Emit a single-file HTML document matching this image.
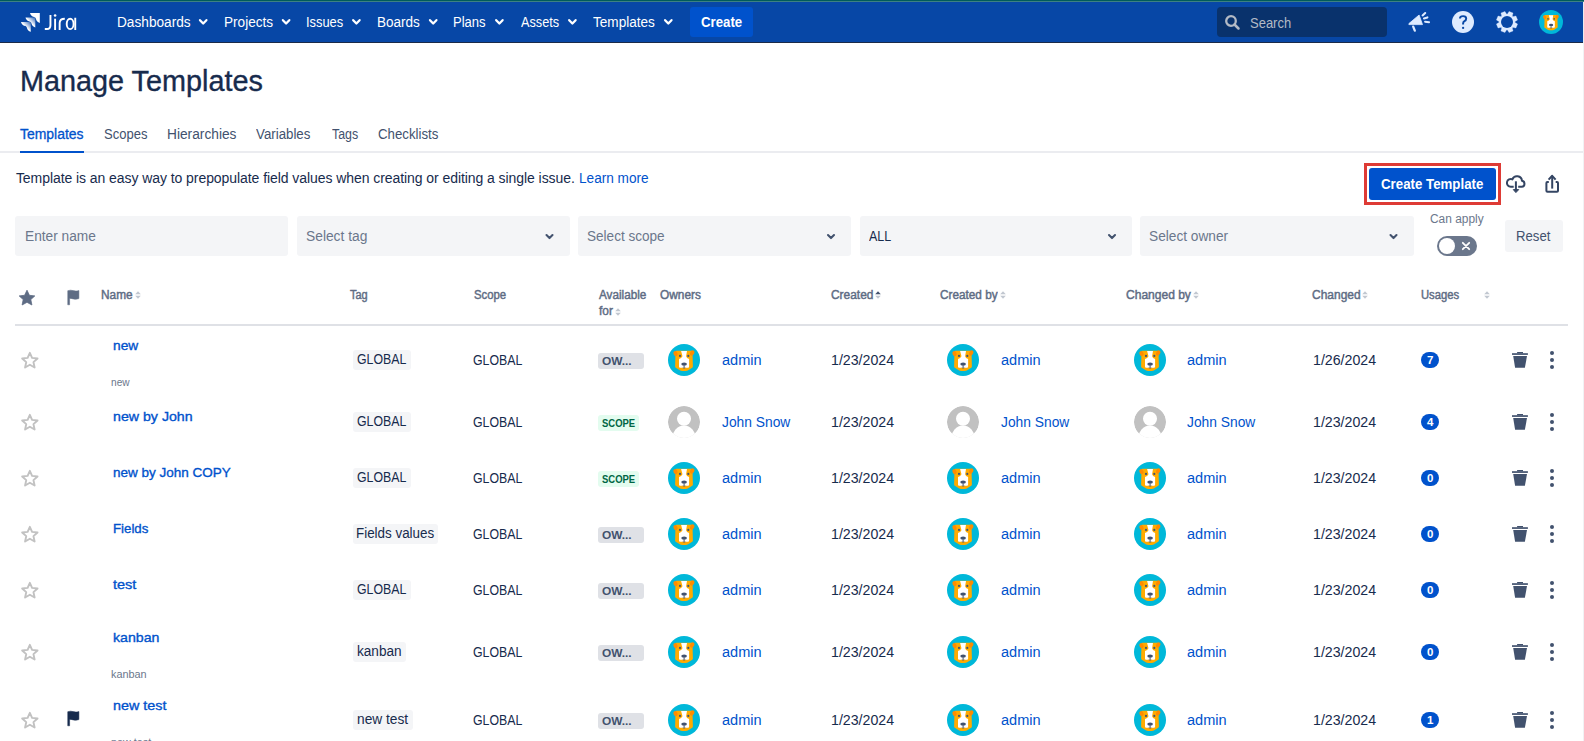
<!DOCTYPE html>
<html><head><meta charset="utf-8"><title>Manage Templates</title>
<style>
html,body{margin:0;padding:0;background:#fff;width:1584px;height:741px;overflow:hidden;position:relative;font-family:"Liberation Sans",sans-serif;}
.t{position:absolute;white-space:nowrap;font-family:"Liberation Sans",sans-serif;}
svg{overflow:visible}
</style></head><body>
<div style="position:absolute;left:0px;top:0px;width:1584px;height:1px;background:#005B5C;border-radius:0px;"></div>
<div style="position:absolute;left:0px;top:1px;width:1584px;height:1px;background:#3D8181;border-radius:0px;"></div>
<div style="position:absolute;left:0px;top:2px;width:1583px;height:40px;background:#0747A6;border-radius:0px;"></div>
<div style="position:absolute;left:0px;top:42px;width:1583px;height:1px;background:#1B2B48;border-radius:0px;"></div>
<div style="position:absolute;left:1583px;top:2px;width:1px;height:41px;background:#E9EBEF;border-radius:0px;"></div>
<div style="position:absolute;left:1583px;top:43px;width:1px;height:698px;background:#F1F2F4;border-radius:0px;"></div>
<svg style="position:absolute;left:19px;top:11px" width="24" height="22" viewBox="0 0 24 22">
<defs><linearGradient id="lg1" x1="1" y1="0" x2="0" y2="1"><stop offset="0.05" stop-color="#fff" stop-opacity="0.25"/><stop offset="0.5" stop-color="#fff"/></linearGradient></defs>
<path transform="translate(11,2.1)" d="M0 0 H9.8 V9.8 C8.6 9.5 7.2 8.6 6.4 7.2 C6 6.4 6 5.6 5.6 4.9 C5 4.1 4.2 3.9 3.3 3.7 C1.6 3.2 0.4 1.8 0 0 Z" fill="#fff"/>
<path transform="translate(6.5,6.6)" d="M0 0 H9.8 V9.8 C8.6 9.5 7.2 8.6 6.4 7.2 C6 6.4 6 5.6 5.6 4.9 C5 4.1 4.2 3.9 3.3 3.7 C1.6 3.2 0.4 1.8 0 0 Z" fill="url(#lg1)"/>
<path transform="translate(2,11)" d="M0 0 H9.8 V9.8 C8.6 9.5 7.2 8.6 6.4 7.2 C6 6.4 6 5.6 5.6 4.9 C5 4.1 4.2 3.9 3.3 3.7 C1.6 3.2 0.4 1.8 0 0 Z" fill="url(#lg1)"/>
</svg>
<svg style="position:absolute;left:44px;top:13px" width="34" height="19" viewBox="0 0 34 19">
<path d="M6.45 1.9 V12.3 Q6.45 16.05 3 16.05 H0.8" stroke="#fff" stroke-width="1.9" fill="none"/>
<circle cx="11.1" cy="2.5" r="1.3" fill="#fff"/>
<path d="M11.1 5.7 V17" stroke="#fff" stroke-width="1.9"/>
<path d="M15.65 17 V10 Q15.65 5.7 20.8 5.7" stroke="#fff" stroke-width="1.9" fill="none"/>
<ellipse cx="26.15" cy="10.9" rx="3.45" ry="5.2" stroke="#fff" stroke-width="1.9" fill="none"/>
<path d="M31.25 4.75 V17" stroke="#fff" stroke-width="1.9"/>
</svg>
<svg style="position:absolute;left:0;top:0;overflow:visible" width="1" height="1"><path d="M200.0 20.2 L203.2 23.5 L206.4 20.2" stroke="#FFFFFF" stroke-width="2.3" fill="none" stroke-linecap="round" stroke-linejoin="round"/></svg>
<svg style="position:absolute;left:0;top:0;overflow:visible" width="1" height="1"><path d="M282.9 20.2 L286.09999999999997 23.5 L289.29999999999995 20.2" stroke="#FFFFFF" stroke-width="2.3" fill="none" stroke-linecap="round" stroke-linejoin="round"/></svg>
<svg style="position:absolute;left:0;top:0;overflow:visible" width="1" height="1"><path d="M353.2 20.2 L356.4 23.5 L359.59999999999997 20.2" stroke="#FFFFFF" stroke-width="2.3" fill="none" stroke-linecap="round" stroke-linejoin="round"/></svg>
<svg style="position:absolute;left:0;top:0;overflow:visible" width="1" height="1"><path d="M430.0 20.2 L433.2 23.5 L436.4 20.2" stroke="#FFFFFF" stroke-width="2.3" fill="none" stroke-linecap="round" stroke-linejoin="round"/></svg>
<svg style="position:absolute;left:0;top:0;overflow:visible" width="1" height="1"><path d="M496.2 20.2 L499.4 23.5 L502.59999999999997 20.2" stroke="#FFFFFF" stroke-width="2.3" fill="none" stroke-linecap="round" stroke-linejoin="round"/></svg>
<svg style="position:absolute;left:0;top:0;overflow:visible" width="1" height="1"><path d="M569.2 20.2 L572.4000000000001 23.5 L575.6 20.2" stroke="#FFFFFF" stroke-width="2.3" fill="none" stroke-linecap="round" stroke-linejoin="round"/></svg>
<svg style="position:absolute;left:0;top:0;overflow:visible" width="1" height="1"><path d="M665.1 20.2 L668.3000000000001 23.5 L671.5 20.2" stroke="#FFFFFF" stroke-width="2.3" fill="none" stroke-linecap="round" stroke-linejoin="round"/></svg>
<div style="position:absolute;left:690px;top:7px;width:63px;height:30px;background:#0052CC;border-radius:3px;"></div>
<div style="position:absolute;left:1217px;top:7px;width:170px;height:30px;background:#09326C;border-radius:4px;"></div>
<svg style="position:absolute;left:1224px;top:14px" width="17" height="17" viewBox="0 0 17 17"><circle cx="7" cy="7" r="4.8" stroke="#B3BAC5" stroke-width="2.3" fill="none"/><path d="M10.5 10.5 L14.5 14.5" stroke="#B3BAC5" stroke-width="2.5" stroke-linecap="round"/></svg>
<svg style="position:absolute;left:1404px;top:8px" width="28" height="28" viewBox="0 0 28 28">
<path d="M4.9 15.6 L15.1 7 L18.5 16.6 L4.9 16.6 Z" fill="#DEEBFF" stroke="#DEEBFF" stroke-width="0.8" stroke-linejoin="round"/>
<path d="M9.2 18.6 L10.8 22.6" stroke="#DEEBFF" stroke-width="2.3" stroke-linecap="round"/>
<path d="M18.6 7.4 L21.2 5" stroke="#DEEBFF" stroke-width="2.1" stroke-linecap="round"/>
<path d="M20 10.4 L23.4 9.4" stroke="#DEEBFF" stroke-width="2.1" stroke-linecap="round"/>
<path d="M21.1 13.7 L25 14.2" stroke="#DEEBFF" stroke-width="2.1" stroke-linecap="round"/>
</svg>
<svg style="position:absolute;left:1451px;top:10px" width="24" height="24" viewBox="0 0 24 24">
<circle cx="12" cy="12" r="11" fill="#DEEBFF"/>
<path d="M9 8.4 Q9 6.1 12.1 6.1 Q15.2 6.1 15.2 8.6 Q15.2 10.3 13.5 11.2 Q12.1 12 12.1 13.4 V14.6" stroke="#0747A6" stroke-width="1.95" fill="none"/>
<circle cx="12.1" cy="17.9" r="1.15" fill="#0747A6"/>
</svg>
<svg style="position:absolute;left:1496px;top:11px" width="22" height="22" viewBox="0 0 22 22"><polygon points="11.00,3.30 11.82,2.44 13.06,0.40 17.04,2.05 16.47,4.36 16.44,5.56 17.64,5.53 19.95,4.96 21.60,8.94 19.56,10.18 18.70,11.00 19.56,11.82 21.60,13.06 19.95,17.04 17.64,16.47 16.44,16.44 16.47,17.64 17.04,19.95 13.06,21.60 11.82,19.56 11.00,18.70 10.18,19.56 8.94,21.60 4.96,19.95 5.53,17.64 5.56,16.44 4.36,16.47 2.05,17.04 0.40,13.06 2.44,11.82 3.30,11.00 2.44,10.18 0.40,8.94 2.05,4.96 4.36,5.53 5.56,5.56 5.53,4.36 4.96,2.05 8.94,0.40 10.18,2.44" fill="#DEEBFF" stroke="#DEEBFF" stroke-width="0.3" stroke-linejoin="round"/><circle cx="11" cy="11" r="6" fill="#0747A6"/></svg>
<svg style="position:absolute;left:1539px;top:10px" width="24" height="24" viewBox="0 0 32 32"><circle cx="16" cy="16" r="16" fill="#00B8D9"/>
<path d="M8.4 6.8 H23.6 Q24.3 6.8 24.5 8 L24.9 22.5 Q24.8 23.5 23.8 24 L19.8 26.6 Q16 27.6 12.2 26.6 L8.2 24 Q7.2 23.5 7.1 22.5 L7.5 8 Q7.7 6.8 8.4 6.8 Z" fill="#FFAB00"/>
<ellipse cx="7.5" cy="9.6" rx="2" ry="2.6" transform="rotate(-25 7.5 9.6)" fill="#FF8B00"/>
<ellipse cx="24.2" cy="9" rx="2" ry="2.7" transform="rotate(25 24.2 9)" fill="#FF8B00"/>
<path d="M13.1 7.1 H19 L18.1 12.2 Q18.6 14.3 21.1 15 L21.1 22.8 Q21 23.8 20 23.8 H12.1 Q11 23.8 11 22.8 L11 15 Q13.5 14.3 14.5 12.2 Z" fill="#FFFFFF"/>
<circle cx="12" cy="11.9" r="1.1" fill="#42526E"/><circle cx="20.3" cy="11.9" r="1.1" fill="#42526E"/>
<ellipse cx="16.1" cy="20.1" rx="2.85" ry="1.7" fill="#42526E"/>
<path d="M16.1 21.5 V23.8" stroke="#42526E" stroke-width="1"/>
<path d="M14.2 23.8 Q16.1 25.4 17.9 23.8 Z" fill="#42526E"/></svg>
<div style="position:absolute;left:0px;top:151px;width:1583px;height:2px;background:#EBECF0;border-radius:0px;"></div>
<div style="position:absolute;left:20px;top:151px;width:64px;height:2px;background:#0052CC;border-radius:0px;"></div>
<div style="position:absolute;left:1364px;top:163px;width:131px;height:36px;border:3px solid #DE3B35;"></div>
<div style="position:absolute;left:1369px;top:168px;width:127px;height:32px;background:#0052CC;border-radius:3px;"></div>
<svg style="position:absolute;left:1502px;top:170px" width="28" height="26" viewBox="0 0 28 26">
<path d="M11.7 16.8 H8.8 A3.9 3.9 0 1 1 10.39 9.34 A5 5 0 0 1 19.98 10.86 A3 3 0 0 1 19.8 16.8 H16.2" stroke="#344563" stroke-width="2" fill="none" stroke-linejoin="round"/>
<path d="M13.9 11.3 V21" stroke="#344563" stroke-width="2"/>
<path d="M11.3 19.6 L13.9 22.6 L16.7 19.6 Z" fill="#344563" stroke="#344563" stroke-width="1" stroke-linejoin="round"/>
</svg>
<svg style="position:absolute;left:1502px;top:170px" width="60" height="26" viewBox="0 0 60 26">
<path d="M46.8 11.9 H45.4 Q44.4 11.9 44.4 12.9 V20.8 Q44.4 21.8 45.4 21.8 H55 Q56 21.8 56 20.8 V12.9 Q56 11.9 55 11.9 H53.7" stroke="#344563" stroke-width="2" fill="none" stroke-linejoin="round"/>
<path d="M50.2 6.6 V18.6" stroke="#344563" stroke-width="2"/>
<path d="M46.6 9.6 L50.2 5.8 L53.6 9.6" stroke="#344563" stroke-width="2" fill="none" stroke-linejoin="round"/>
</svg>
<div style="position:absolute;left:15px;top:216px;width:273px;height:40px;background:#F4F5F7;border-radius:3px;"></div>
<div style="position:absolute;left:296.5px;top:216px;width:273px;height:40px;background:#F4F5F7;border-radius:3px;"></div>
<svg style="position:absolute;left:0;top:0;overflow:visible" width="1" height="1"><path d="M546.5 235.1 L549.5 238.1 L552.5 235.1" stroke="#42526E" stroke-width="2.1" fill="none" stroke-linecap="round" stroke-linejoin="round"/></svg>
<div style="position:absolute;left:578px;top:216px;width:273px;height:40px;background:#F4F5F7;border-radius:3px;"></div>
<svg style="position:absolute;left:0;top:0;overflow:visible" width="1" height="1"><path d="M828 235.1 L831.0 238.1 L834 235.1" stroke="#42526E" stroke-width="2.1" fill="none" stroke-linecap="round" stroke-linejoin="round"/></svg>
<div style="position:absolute;left:859.5px;top:216px;width:272.5px;height:40px;background:#F4F5F7;border-radius:3px;"></div>
<svg style="position:absolute;left:0;top:0;overflow:visible" width="1" height="1"><path d="M1109.0 235.1 L1112.0 238.1 L1115.0 235.1" stroke="#42526E" stroke-width="2.1" fill="none" stroke-linecap="round" stroke-linejoin="round"/></svg>
<div style="position:absolute;left:1140px;top:216px;width:273.5px;height:40px;background:#F4F5F7;border-radius:3px;"></div>
<svg style="position:absolute;left:0;top:0;overflow:visible" width="1" height="1"><path d="M1390.5 235.1 L1393.5 238.1 L1396.5 235.1" stroke="#42526E" stroke-width="2.1" fill="none" stroke-linecap="round" stroke-linejoin="round"/></svg>
<div style="position:absolute;left:1437px;top:236px;width:40px;height:20px;background:#6B778C;border-radius:10px;"></div>
<div style="position:absolute;left:1439px;top:238px;width:16px;height:16px;border-radius:8px;background:#fff"></div>
<svg style="position:absolute;left:1459px;top:239px" width="14" height="14" viewBox="0 0 14 14"><path d="M3.8 3.8 L10.2 10.2 M10.2 3.8 L3.8 10.2" stroke="#fff" stroke-width="1.8" stroke-linecap="round"/></svg>
<div style="position:absolute;left:1505px;top:220px;width:58px;height:32px;background:#F4F5F7;border-radius:3px;"></div>
<svg style="position:absolute;left:18px;top:289px" width="18" height="18" viewBox="0 0 18 18"><path d="M9 1.2 L11.4 6.3 L16.8 6.9 L12.8 10.6 L13.9 16 L9 13.3 L4.1 16 L5.2 10.6 L1.2 6.9 L6.6 6.3 Z" fill="#5E6C84" stroke="#5E6C84" stroke-width="0.8" stroke-linejoin="round"/></svg>
<svg style="position:absolute;left:66px;top:289px" width="16" height="18" viewBox="0 0 16 18"><path d="M1.75 1.7 Q4.5 0.7 7.2 1.6 Q10 2.6 12.9 1.5 V9.6 Q10 10.8 7.2 9.9 Q5 9.2 3.6 9.5 V15.8 H1.75 Z" fill="#5E6C84" stroke="#5E6C84" stroke-width="0.5" stroke-linejoin="round"/></svg>
<svg style="position:absolute;left:135.2px;top:291px" width="6" height="8" viewBox="0 0 6 8"><path d="M0.2 3.2 L3 0.2 L5.8 3.2Z" fill="#C1C7D0"/><path d="M0.2 4.8 L3 7.8 L5.8 4.8Z" fill="#C1C7D0"/></svg>
<svg style="position:absolute;left:875.2px;top:291px" width="6" height="8" viewBox="0 0 6 8"><path d="M0.2 3.2 L3 0.2 L5.8 3.2Z" fill="#42526E"/><path d="M0.2 4.8 L3 7.8 L5.8 4.8Z" fill="#C1C7D0"/></svg>
<svg style="position:absolute;left:1000.0px;top:291px" width="6" height="8" viewBox="0 0 6 8"><path d="M0.2 3.2 L3 0.2 L5.8 3.2Z" fill="#C1C7D0"/><path d="M0.2 4.8 L3 7.8 L5.8 4.8Z" fill="#C1C7D0"/></svg>
<svg style="position:absolute;left:1192.9px;top:291px" width="6" height="8" viewBox="0 0 6 8"><path d="M0.2 3.2 L3 0.2 L5.8 3.2Z" fill="#C1C7D0"/><path d="M0.2 4.8 L3 7.8 L5.8 4.8Z" fill="#C1C7D0"/></svg>
<svg style="position:absolute;left:1362.2px;top:291px" width="6" height="8" viewBox="0 0 6 8"><path d="M0.2 3.2 L3 0.2 L5.8 3.2Z" fill="#C1C7D0"/><path d="M0.2 4.8 L3 7.8 L5.8 4.8Z" fill="#C1C7D0"/></svg>
<svg style="position:absolute;left:614.5px;top:307.5px" width="6" height="8" viewBox="0 0 6 8"><path d="M0.2 3.2 L3 0.2 L5.8 3.2Z" fill="#C1C7D0"/><path d="M0.2 4.8 L3 7.8 L5.8 4.8Z" fill="#C1C7D0"/></svg>
<svg style="position:absolute;left:1484px;top:291px" width="6" height="8" viewBox="0 0 6 8"><path d="M0.2 3.2 L3 0.2 L5.8 3.2Z" fill="#C1C7D0"/><path d="M0.2 4.8 L3 7.8 L5.8 4.8Z" fill="#C1C7D0"/></svg>
<div style="position:absolute;left:15px;top:324px;width:1553px;height:2px;background:#DFE1E6;border-radius:0px;"></div>
<svg style="position:absolute;left:20px;top:351px" width="20" height="18" viewBox="0 0 20 18"><path d="M9.85,1.85 L12.08,6.88 L17.55,7.45 L13.46,11.12 L14.61,16.50 L9.85,13.75 L5.09,16.50 L6.24,11.12 L2.15,7.45 L7.62,6.88 Z" fill="none" stroke="#C2C2C2" stroke-width="1.9" stroke-linejoin="round"/></svg>
<div style="position:absolute;left:353px;top:349.7px;width:57.6px;height:20px;background:#F4F5F7;border-radius:3px;"></div>
<div style="position:absolute;left:598px;top:353.1px;width:45.6px;height:16px;background:#DFE1E6;border-radius:3px;"></div>
<svg style="position:absolute;left:668px;top:344px" width="32" height="32" viewBox="0 0 32 32"><circle cx="16" cy="16" r="16" fill="#00B8D9"/>
<path d="M8.4 6.8 H23.6 Q24.3 6.8 24.5 8 L24.9 22.5 Q24.8 23.5 23.8 24 L19.8 26.6 Q16 27.6 12.2 26.6 L8.2 24 Q7.2 23.5 7.1 22.5 L7.5 8 Q7.7 6.8 8.4 6.8 Z" fill="#FFAB00"/>
<ellipse cx="7.5" cy="9.6" rx="2" ry="2.6" transform="rotate(-25 7.5 9.6)" fill="#FF8B00"/>
<ellipse cx="24.2" cy="9" rx="2" ry="2.7" transform="rotate(25 24.2 9)" fill="#FF8B00"/>
<path d="M13.1 7.1 H19 L18.1 12.2 Q18.6 14.3 21.1 15 L21.1 22.8 Q21 23.8 20 23.8 H12.1 Q11 23.8 11 22.8 L11 15 Q13.5 14.3 14.5 12.2 Z" fill="#FFFFFF"/>
<circle cx="12" cy="11.9" r="1.1" fill="#42526E"/><circle cx="20.3" cy="11.9" r="1.1" fill="#42526E"/>
<ellipse cx="16.1" cy="20.1" rx="2.85" ry="1.7" fill="#42526E"/>
<path d="M16.1 21.5 V23.8" stroke="#42526E" stroke-width="1"/>
<path d="M14.2 23.8 Q16.1 25.4 17.9 23.8 Z" fill="#42526E"/></svg>
<svg style="position:absolute;left:947px;top:344px" width="32" height="32" viewBox="0 0 32 32"><circle cx="16" cy="16" r="16" fill="#00B8D9"/>
<path d="M8.4 6.8 H23.6 Q24.3 6.8 24.5 8 L24.9 22.5 Q24.8 23.5 23.8 24 L19.8 26.6 Q16 27.6 12.2 26.6 L8.2 24 Q7.2 23.5 7.1 22.5 L7.5 8 Q7.7 6.8 8.4 6.8 Z" fill="#FFAB00"/>
<ellipse cx="7.5" cy="9.6" rx="2" ry="2.6" transform="rotate(-25 7.5 9.6)" fill="#FF8B00"/>
<ellipse cx="24.2" cy="9" rx="2" ry="2.7" transform="rotate(25 24.2 9)" fill="#FF8B00"/>
<path d="M13.1 7.1 H19 L18.1 12.2 Q18.6 14.3 21.1 15 L21.1 22.8 Q21 23.8 20 23.8 H12.1 Q11 23.8 11 22.8 L11 15 Q13.5 14.3 14.5 12.2 Z" fill="#FFFFFF"/>
<circle cx="12" cy="11.9" r="1.1" fill="#42526E"/><circle cx="20.3" cy="11.9" r="1.1" fill="#42526E"/>
<ellipse cx="16.1" cy="20.1" rx="2.85" ry="1.7" fill="#42526E"/>
<path d="M16.1 21.5 V23.8" stroke="#42526E" stroke-width="1"/>
<path d="M14.2 23.8 Q16.1 25.4 17.9 23.8 Z" fill="#42526E"/></svg>
<svg style="position:absolute;left:1134px;top:344px" width="32" height="32" viewBox="0 0 32 32"><circle cx="16" cy="16" r="16" fill="#00B8D9"/>
<path d="M8.4 6.8 H23.6 Q24.3 6.8 24.5 8 L24.9 22.5 Q24.8 23.5 23.8 24 L19.8 26.6 Q16 27.6 12.2 26.6 L8.2 24 Q7.2 23.5 7.1 22.5 L7.5 8 Q7.7 6.8 8.4 6.8 Z" fill="#FFAB00"/>
<ellipse cx="7.5" cy="9.6" rx="2" ry="2.6" transform="rotate(-25 7.5 9.6)" fill="#FF8B00"/>
<ellipse cx="24.2" cy="9" rx="2" ry="2.7" transform="rotate(25 24.2 9)" fill="#FF8B00"/>
<path d="M13.1 7.1 H19 L18.1 12.2 Q18.6 14.3 21.1 15 L21.1 22.8 Q21 23.8 20 23.8 H12.1 Q11 23.8 11 22.8 L11 15 Q13.5 14.3 14.5 12.2 Z" fill="#FFFFFF"/>
<circle cx="12" cy="11.9" r="1.1" fill="#42526E"/><circle cx="20.3" cy="11.9" r="1.1" fill="#42526E"/>
<ellipse cx="16.1" cy="20.1" rx="2.85" ry="1.7" fill="#42526E"/>
<path d="M16.1 21.5 V23.8" stroke="#42526E" stroke-width="1"/>
<path d="M14.2 23.8 Q16.1 25.4 17.9 23.8 Z" fill="#42526E"/></svg>
<div style="position:absolute;left:1421px;top:351.7px;width:18.2px;height:16px;background:#0052CC;border-radius:8px;"></div>
<div style="position:absolute;left:1421px;top:351.7px;width:18.2px;height:16px;line-height:16px;text-align:center;color:#fff;font-size:11.5px;font-weight:700;font-family:'Liberation Sans',sans-serif">7</div>
<svg style="position:absolute;left:1510px;top:350px" width="20" height="20" viewBox="0 0 20 20"><path d="M7.1 2 H13 V3.4 H7.1Z" fill="#42526E"/><path d="M2 3.2 H17.9 V4.9 H2Z" fill="#42526E"/><path d="M3.2 6 H17 L14.9 17.8 H5.1Z" fill="#42526E"/></svg>
<svg style="position:absolute;left:1548px;top:350px" width="8" height="20" viewBox="0 0 8 20"><circle cx="4" cy="3" r="2" fill="#42526E"/><circle cx="4" cy="10" r="2" fill="#42526E"/><circle cx="4" cy="17" r="2" fill="#42526E"/></svg>
<svg style="position:absolute;left:20px;top:413px" width="20" height="18" viewBox="0 0 20 18"><path d="M9.85,1.85 L12.08,6.88 L17.55,7.45 L13.46,11.12 L14.61,16.50 L9.85,13.75 L5.09,16.50 L6.24,11.12 L2.15,7.45 L7.62,6.88 Z" fill="none" stroke="#C2C2C2" stroke-width="1.9" stroke-linejoin="round"/></svg>
<div style="position:absolute;left:353px;top:411.7px;width:57.6px;height:20px;background:#F4F5F7;border-radius:3px;"></div>
<div style="position:absolute;left:598px;top:414.8px;width:40.8px;height:16px;background:#E3FCEF;border-radius:3px;"></div>
<svg style="position:absolute;left:668px;top:406px" width="32" height="32" viewBox="0 0 32 32"><defs><clipPath id="cpc"><circle cx="16" cy="16" r="16"/></clipPath></defs>
<g clip-path="url(#cpc)"><rect width="32" height="32" fill="#FFFFFF"/><circle cx="16" cy="16" r="16" fill="#C1C1C1"/>
<circle cx="16" cy="12.8" r="7" fill="#FFFFFF"/><ellipse cx="16" cy="33" rx="12" ry="13.5" fill="#FFFFFF"/></g></svg>
<svg style="position:absolute;left:947px;top:406px" width="32" height="32" viewBox="0 0 32 32"><defs><clipPath id="cpc"><circle cx="16" cy="16" r="16"/></clipPath></defs>
<g clip-path="url(#cpc)"><rect width="32" height="32" fill="#FFFFFF"/><circle cx="16" cy="16" r="16" fill="#C1C1C1"/>
<circle cx="16" cy="12.8" r="7" fill="#FFFFFF"/><ellipse cx="16" cy="33" rx="12" ry="13.5" fill="#FFFFFF"/></g></svg>
<svg style="position:absolute;left:1134px;top:406px" width="32" height="32" viewBox="0 0 32 32"><defs><clipPath id="cpc"><circle cx="16" cy="16" r="16"/></clipPath></defs>
<g clip-path="url(#cpc)"><rect width="32" height="32" fill="#FFFFFF"/><circle cx="16" cy="16" r="16" fill="#C1C1C1"/>
<circle cx="16" cy="12.8" r="7" fill="#FFFFFF"/><ellipse cx="16" cy="33" rx="12" ry="13.5" fill="#FFFFFF"/></g></svg>
<div style="position:absolute;left:1421px;top:413.7px;width:18.2px;height:16px;background:#0052CC;border-radius:8px;"></div>
<div style="position:absolute;left:1421px;top:413.7px;width:18.2px;height:16px;line-height:16px;text-align:center;color:#fff;font-size:11.5px;font-weight:700;font-family:'Liberation Sans',sans-serif">4</div>
<svg style="position:absolute;left:1510px;top:412px" width="20" height="20" viewBox="0 0 20 20"><path d="M7.1 2 H13 V3.4 H7.1Z" fill="#42526E"/><path d="M2 3.2 H17.9 V4.9 H2Z" fill="#42526E"/><path d="M3.2 6 H17 L14.9 17.8 H5.1Z" fill="#42526E"/></svg>
<svg style="position:absolute;left:1548px;top:412px" width="8" height="20" viewBox="0 0 8 20"><circle cx="4" cy="3" r="2" fill="#42526E"/><circle cx="4" cy="10" r="2" fill="#42526E"/><circle cx="4" cy="17" r="2" fill="#42526E"/></svg>
<svg style="position:absolute;left:20px;top:469px" width="20" height="18" viewBox="0 0 20 18"><path d="M9.85,1.85 L12.08,6.88 L17.55,7.45 L13.46,11.12 L14.61,16.50 L9.85,13.75 L5.09,16.50 L6.24,11.12 L2.15,7.45 L7.62,6.88 Z" fill="none" stroke="#C2C2C2" stroke-width="1.9" stroke-linejoin="round"/></svg>
<div style="position:absolute;left:353px;top:467.7px;width:57.6px;height:20px;background:#F4F5F7;border-radius:3px;"></div>
<div style="position:absolute;left:598px;top:470.8px;width:40.8px;height:16px;background:#E3FCEF;border-radius:3px;"></div>
<svg style="position:absolute;left:668px;top:462px" width="32" height="32" viewBox="0 0 32 32"><circle cx="16" cy="16" r="16" fill="#00B8D9"/>
<path d="M8.4 6.8 H23.6 Q24.3 6.8 24.5 8 L24.9 22.5 Q24.8 23.5 23.8 24 L19.8 26.6 Q16 27.6 12.2 26.6 L8.2 24 Q7.2 23.5 7.1 22.5 L7.5 8 Q7.7 6.8 8.4 6.8 Z" fill="#FFAB00"/>
<ellipse cx="7.5" cy="9.6" rx="2" ry="2.6" transform="rotate(-25 7.5 9.6)" fill="#FF8B00"/>
<ellipse cx="24.2" cy="9" rx="2" ry="2.7" transform="rotate(25 24.2 9)" fill="#FF8B00"/>
<path d="M13.1 7.1 H19 L18.1 12.2 Q18.6 14.3 21.1 15 L21.1 22.8 Q21 23.8 20 23.8 H12.1 Q11 23.8 11 22.8 L11 15 Q13.5 14.3 14.5 12.2 Z" fill="#FFFFFF"/>
<circle cx="12" cy="11.9" r="1.1" fill="#42526E"/><circle cx="20.3" cy="11.9" r="1.1" fill="#42526E"/>
<ellipse cx="16.1" cy="20.1" rx="2.85" ry="1.7" fill="#42526E"/>
<path d="M16.1 21.5 V23.8" stroke="#42526E" stroke-width="1"/>
<path d="M14.2 23.8 Q16.1 25.4 17.9 23.8 Z" fill="#42526E"/></svg>
<svg style="position:absolute;left:947px;top:462px" width="32" height="32" viewBox="0 0 32 32"><circle cx="16" cy="16" r="16" fill="#00B8D9"/>
<path d="M8.4 6.8 H23.6 Q24.3 6.8 24.5 8 L24.9 22.5 Q24.8 23.5 23.8 24 L19.8 26.6 Q16 27.6 12.2 26.6 L8.2 24 Q7.2 23.5 7.1 22.5 L7.5 8 Q7.7 6.8 8.4 6.8 Z" fill="#FFAB00"/>
<ellipse cx="7.5" cy="9.6" rx="2" ry="2.6" transform="rotate(-25 7.5 9.6)" fill="#FF8B00"/>
<ellipse cx="24.2" cy="9" rx="2" ry="2.7" transform="rotate(25 24.2 9)" fill="#FF8B00"/>
<path d="M13.1 7.1 H19 L18.1 12.2 Q18.6 14.3 21.1 15 L21.1 22.8 Q21 23.8 20 23.8 H12.1 Q11 23.8 11 22.8 L11 15 Q13.5 14.3 14.5 12.2 Z" fill="#FFFFFF"/>
<circle cx="12" cy="11.9" r="1.1" fill="#42526E"/><circle cx="20.3" cy="11.9" r="1.1" fill="#42526E"/>
<ellipse cx="16.1" cy="20.1" rx="2.85" ry="1.7" fill="#42526E"/>
<path d="M16.1 21.5 V23.8" stroke="#42526E" stroke-width="1"/>
<path d="M14.2 23.8 Q16.1 25.4 17.9 23.8 Z" fill="#42526E"/></svg>
<svg style="position:absolute;left:1134px;top:462px" width="32" height="32" viewBox="0 0 32 32"><circle cx="16" cy="16" r="16" fill="#00B8D9"/>
<path d="M8.4 6.8 H23.6 Q24.3 6.8 24.5 8 L24.9 22.5 Q24.8 23.5 23.8 24 L19.8 26.6 Q16 27.6 12.2 26.6 L8.2 24 Q7.2 23.5 7.1 22.5 L7.5 8 Q7.7 6.8 8.4 6.8 Z" fill="#FFAB00"/>
<ellipse cx="7.5" cy="9.6" rx="2" ry="2.6" transform="rotate(-25 7.5 9.6)" fill="#FF8B00"/>
<ellipse cx="24.2" cy="9" rx="2" ry="2.7" transform="rotate(25 24.2 9)" fill="#FF8B00"/>
<path d="M13.1 7.1 H19 L18.1 12.2 Q18.6 14.3 21.1 15 L21.1 22.8 Q21 23.8 20 23.8 H12.1 Q11 23.8 11 22.8 L11 15 Q13.5 14.3 14.5 12.2 Z" fill="#FFFFFF"/>
<circle cx="12" cy="11.9" r="1.1" fill="#42526E"/><circle cx="20.3" cy="11.9" r="1.1" fill="#42526E"/>
<ellipse cx="16.1" cy="20.1" rx="2.85" ry="1.7" fill="#42526E"/>
<path d="M16.1 21.5 V23.8" stroke="#42526E" stroke-width="1"/>
<path d="M14.2 23.8 Q16.1 25.4 17.9 23.8 Z" fill="#42526E"/></svg>
<div style="position:absolute;left:1421px;top:469.7px;width:18.2px;height:16px;background:#0052CC;border-radius:8px;"></div>
<div style="position:absolute;left:1421px;top:469.7px;width:18.2px;height:16px;line-height:16px;text-align:center;color:#fff;font-size:11.5px;font-weight:700;font-family:'Liberation Sans',sans-serif">0</div>
<svg style="position:absolute;left:1510px;top:468px" width="20" height="20" viewBox="0 0 20 20"><path d="M7.1 2 H13 V3.4 H7.1Z" fill="#42526E"/><path d="M2 3.2 H17.9 V4.9 H2Z" fill="#42526E"/><path d="M3.2 6 H17 L14.9 17.8 H5.1Z" fill="#42526E"/></svg>
<svg style="position:absolute;left:1548px;top:468px" width="8" height="20" viewBox="0 0 8 20"><circle cx="4" cy="3" r="2" fill="#42526E"/><circle cx="4" cy="10" r="2" fill="#42526E"/><circle cx="4" cy="17" r="2" fill="#42526E"/></svg>
<svg style="position:absolute;left:20px;top:525px" width="20" height="18" viewBox="0 0 20 18"><path d="M9.85,1.85 L12.08,6.88 L17.55,7.45 L13.46,11.12 L14.61,16.50 L9.85,13.75 L5.09,16.50 L6.24,11.12 L2.15,7.45 L7.62,6.88 Z" fill="none" stroke="#C2C2C2" stroke-width="1.9" stroke-linejoin="round"/></svg>
<div style="position:absolute;left:353px;top:523.7px;width:84.6px;height:20px;background:#F4F5F7;border-radius:3px;"></div>
<div style="position:absolute;left:598px;top:527.1px;width:45.6px;height:16px;background:#DFE1E6;border-radius:3px;"></div>
<svg style="position:absolute;left:668px;top:518px" width="32" height="32" viewBox="0 0 32 32"><circle cx="16" cy="16" r="16" fill="#00B8D9"/>
<path d="M8.4 6.8 H23.6 Q24.3 6.8 24.5 8 L24.9 22.5 Q24.8 23.5 23.8 24 L19.8 26.6 Q16 27.6 12.2 26.6 L8.2 24 Q7.2 23.5 7.1 22.5 L7.5 8 Q7.7 6.8 8.4 6.8 Z" fill="#FFAB00"/>
<ellipse cx="7.5" cy="9.6" rx="2" ry="2.6" transform="rotate(-25 7.5 9.6)" fill="#FF8B00"/>
<ellipse cx="24.2" cy="9" rx="2" ry="2.7" transform="rotate(25 24.2 9)" fill="#FF8B00"/>
<path d="M13.1 7.1 H19 L18.1 12.2 Q18.6 14.3 21.1 15 L21.1 22.8 Q21 23.8 20 23.8 H12.1 Q11 23.8 11 22.8 L11 15 Q13.5 14.3 14.5 12.2 Z" fill="#FFFFFF"/>
<circle cx="12" cy="11.9" r="1.1" fill="#42526E"/><circle cx="20.3" cy="11.9" r="1.1" fill="#42526E"/>
<ellipse cx="16.1" cy="20.1" rx="2.85" ry="1.7" fill="#42526E"/>
<path d="M16.1 21.5 V23.8" stroke="#42526E" stroke-width="1"/>
<path d="M14.2 23.8 Q16.1 25.4 17.9 23.8 Z" fill="#42526E"/></svg>
<svg style="position:absolute;left:947px;top:518px" width="32" height="32" viewBox="0 0 32 32"><circle cx="16" cy="16" r="16" fill="#00B8D9"/>
<path d="M8.4 6.8 H23.6 Q24.3 6.8 24.5 8 L24.9 22.5 Q24.8 23.5 23.8 24 L19.8 26.6 Q16 27.6 12.2 26.6 L8.2 24 Q7.2 23.5 7.1 22.5 L7.5 8 Q7.7 6.8 8.4 6.8 Z" fill="#FFAB00"/>
<ellipse cx="7.5" cy="9.6" rx="2" ry="2.6" transform="rotate(-25 7.5 9.6)" fill="#FF8B00"/>
<ellipse cx="24.2" cy="9" rx="2" ry="2.7" transform="rotate(25 24.2 9)" fill="#FF8B00"/>
<path d="M13.1 7.1 H19 L18.1 12.2 Q18.6 14.3 21.1 15 L21.1 22.8 Q21 23.8 20 23.8 H12.1 Q11 23.8 11 22.8 L11 15 Q13.5 14.3 14.5 12.2 Z" fill="#FFFFFF"/>
<circle cx="12" cy="11.9" r="1.1" fill="#42526E"/><circle cx="20.3" cy="11.9" r="1.1" fill="#42526E"/>
<ellipse cx="16.1" cy="20.1" rx="2.85" ry="1.7" fill="#42526E"/>
<path d="M16.1 21.5 V23.8" stroke="#42526E" stroke-width="1"/>
<path d="M14.2 23.8 Q16.1 25.4 17.9 23.8 Z" fill="#42526E"/></svg>
<svg style="position:absolute;left:1134px;top:518px" width="32" height="32" viewBox="0 0 32 32"><circle cx="16" cy="16" r="16" fill="#00B8D9"/>
<path d="M8.4 6.8 H23.6 Q24.3 6.8 24.5 8 L24.9 22.5 Q24.8 23.5 23.8 24 L19.8 26.6 Q16 27.6 12.2 26.6 L8.2 24 Q7.2 23.5 7.1 22.5 L7.5 8 Q7.7 6.8 8.4 6.8 Z" fill="#FFAB00"/>
<ellipse cx="7.5" cy="9.6" rx="2" ry="2.6" transform="rotate(-25 7.5 9.6)" fill="#FF8B00"/>
<ellipse cx="24.2" cy="9" rx="2" ry="2.7" transform="rotate(25 24.2 9)" fill="#FF8B00"/>
<path d="M13.1 7.1 H19 L18.1 12.2 Q18.6 14.3 21.1 15 L21.1 22.8 Q21 23.8 20 23.8 H12.1 Q11 23.8 11 22.8 L11 15 Q13.5 14.3 14.5 12.2 Z" fill="#FFFFFF"/>
<circle cx="12" cy="11.9" r="1.1" fill="#42526E"/><circle cx="20.3" cy="11.9" r="1.1" fill="#42526E"/>
<ellipse cx="16.1" cy="20.1" rx="2.85" ry="1.7" fill="#42526E"/>
<path d="M16.1 21.5 V23.8" stroke="#42526E" stroke-width="1"/>
<path d="M14.2 23.8 Q16.1 25.4 17.9 23.8 Z" fill="#42526E"/></svg>
<div style="position:absolute;left:1421px;top:525.7px;width:18.2px;height:16px;background:#0052CC;border-radius:8px;"></div>
<div style="position:absolute;left:1421px;top:525.7px;width:18.2px;height:16px;line-height:16px;text-align:center;color:#fff;font-size:11.5px;font-weight:700;font-family:'Liberation Sans',sans-serif">0</div>
<svg style="position:absolute;left:1510px;top:524px" width="20" height="20" viewBox="0 0 20 20"><path d="M7.1 2 H13 V3.4 H7.1Z" fill="#42526E"/><path d="M2 3.2 H17.9 V4.9 H2Z" fill="#42526E"/><path d="M3.2 6 H17 L14.9 17.8 H5.1Z" fill="#42526E"/></svg>
<svg style="position:absolute;left:1548px;top:524px" width="8" height="20" viewBox="0 0 8 20"><circle cx="4" cy="3" r="2" fill="#42526E"/><circle cx="4" cy="10" r="2" fill="#42526E"/><circle cx="4" cy="17" r="2" fill="#42526E"/></svg>
<svg style="position:absolute;left:20px;top:581px" width="20" height="18" viewBox="0 0 20 18"><path d="M9.85,1.85 L12.08,6.88 L17.55,7.45 L13.46,11.12 L14.61,16.50 L9.85,13.75 L5.09,16.50 L6.24,11.12 L2.15,7.45 L7.62,6.88 Z" fill="none" stroke="#C2C2C2" stroke-width="1.9" stroke-linejoin="round"/></svg>
<div style="position:absolute;left:353px;top:579.7px;width:57.6px;height:20px;background:#F4F5F7;border-radius:3px;"></div>
<div style="position:absolute;left:598px;top:583.1px;width:45.6px;height:16px;background:#DFE1E6;border-radius:3px;"></div>
<svg style="position:absolute;left:668px;top:574px" width="32" height="32" viewBox="0 0 32 32"><circle cx="16" cy="16" r="16" fill="#00B8D9"/>
<path d="M8.4 6.8 H23.6 Q24.3 6.8 24.5 8 L24.9 22.5 Q24.8 23.5 23.8 24 L19.8 26.6 Q16 27.6 12.2 26.6 L8.2 24 Q7.2 23.5 7.1 22.5 L7.5 8 Q7.7 6.8 8.4 6.8 Z" fill="#FFAB00"/>
<ellipse cx="7.5" cy="9.6" rx="2" ry="2.6" transform="rotate(-25 7.5 9.6)" fill="#FF8B00"/>
<ellipse cx="24.2" cy="9" rx="2" ry="2.7" transform="rotate(25 24.2 9)" fill="#FF8B00"/>
<path d="M13.1 7.1 H19 L18.1 12.2 Q18.6 14.3 21.1 15 L21.1 22.8 Q21 23.8 20 23.8 H12.1 Q11 23.8 11 22.8 L11 15 Q13.5 14.3 14.5 12.2 Z" fill="#FFFFFF"/>
<circle cx="12" cy="11.9" r="1.1" fill="#42526E"/><circle cx="20.3" cy="11.9" r="1.1" fill="#42526E"/>
<ellipse cx="16.1" cy="20.1" rx="2.85" ry="1.7" fill="#42526E"/>
<path d="M16.1 21.5 V23.8" stroke="#42526E" stroke-width="1"/>
<path d="M14.2 23.8 Q16.1 25.4 17.9 23.8 Z" fill="#42526E"/></svg>
<svg style="position:absolute;left:947px;top:574px" width="32" height="32" viewBox="0 0 32 32"><circle cx="16" cy="16" r="16" fill="#00B8D9"/>
<path d="M8.4 6.8 H23.6 Q24.3 6.8 24.5 8 L24.9 22.5 Q24.8 23.5 23.8 24 L19.8 26.6 Q16 27.6 12.2 26.6 L8.2 24 Q7.2 23.5 7.1 22.5 L7.5 8 Q7.7 6.8 8.4 6.8 Z" fill="#FFAB00"/>
<ellipse cx="7.5" cy="9.6" rx="2" ry="2.6" transform="rotate(-25 7.5 9.6)" fill="#FF8B00"/>
<ellipse cx="24.2" cy="9" rx="2" ry="2.7" transform="rotate(25 24.2 9)" fill="#FF8B00"/>
<path d="M13.1 7.1 H19 L18.1 12.2 Q18.6 14.3 21.1 15 L21.1 22.8 Q21 23.8 20 23.8 H12.1 Q11 23.8 11 22.8 L11 15 Q13.5 14.3 14.5 12.2 Z" fill="#FFFFFF"/>
<circle cx="12" cy="11.9" r="1.1" fill="#42526E"/><circle cx="20.3" cy="11.9" r="1.1" fill="#42526E"/>
<ellipse cx="16.1" cy="20.1" rx="2.85" ry="1.7" fill="#42526E"/>
<path d="M16.1 21.5 V23.8" stroke="#42526E" stroke-width="1"/>
<path d="M14.2 23.8 Q16.1 25.4 17.9 23.8 Z" fill="#42526E"/></svg>
<svg style="position:absolute;left:1134px;top:574px" width="32" height="32" viewBox="0 0 32 32"><circle cx="16" cy="16" r="16" fill="#00B8D9"/>
<path d="M8.4 6.8 H23.6 Q24.3 6.8 24.5 8 L24.9 22.5 Q24.8 23.5 23.8 24 L19.8 26.6 Q16 27.6 12.2 26.6 L8.2 24 Q7.2 23.5 7.1 22.5 L7.5 8 Q7.7 6.8 8.4 6.8 Z" fill="#FFAB00"/>
<ellipse cx="7.5" cy="9.6" rx="2" ry="2.6" transform="rotate(-25 7.5 9.6)" fill="#FF8B00"/>
<ellipse cx="24.2" cy="9" rx="2" ry="2.7" transform="rotate(25 24.2 9)" fill="#FF8B00"/>
<path d="M13.1 7.1 H19 L18.1 12.2 Q18.6 14.3 21.1 15 L21.1 22.8 Q21 23.8 20 23.8 H12.1 Q11 23.8 11 22.8 L11 15 Q13.5 14.3 14.5 12.2 Z" fill="#FFFFFF"/>
<circle cx="12" cy="11.9" r="1.1" fill="#42526E"/><circle cx="20.3" cy="11.9" r="1.1" fill="#42526E"/>
<ellipse cx="16.1" cy="20.1" rx="2.85" ry="1.7" fill="#42526E"/>
<path d="M16.1 21.5 V23.8" stroke="#42526E" stroke-width="1"/>
<path d="M14.2 23.8 Q16.1 25.4 17.9 23.8 Z" fill="#42526E"/></svg>
<div style="position:absolute;left:1421px;top:581.7px;width:18.2px;height:16px;background:#0052CC;border-radius:8px;"></div>
<div style="position:absolute;left:1421px;top:581.7px;width:18.2px;height:16px;line-height:16px;text-align:center;color:#fff;font-size:11.5px;font-weight:700;font-family:'Liberation Sans',sans-serif">0</div>
<svg style="position:absolute;left:1510px;top:580px" width="20" height="20" viewBox="0 0 20 20"><path d="M7.1 2 H13 V3.4 H7.1Z" fill="#42526E"/><path d="M2 3.2 H17.9 V4.9 H2Z" fill="#42526E"/><path d="M3.2 6 H17 L14.9 17.8 H5.1Z" fill="#42526E"/></svg>
<svg style="position:absolute;left:1548px;top:580px" width="8" height="20" viewBox="0 0 8 20"><circle cx="4" cy="3" r="2" fill="#42526E"/><circle cx="4" cy="10" r="2" fill="#42526E"/><circle cx="4" cy="17" r="2" fill="#42526E"/></svg>
<svg style="position:absolute;left:20px;top:643px" width="20" height="18" viewBox="0 0 20 18"><path d="M9.85,1.85 L12.08,6.88 L17.55,7.45 L13.46,11.12 L14.61,16.50 L9.85,13.75 L5.09,16.50 L6.24,11.12 L2.15,7.45 L7.62,6.88 Z" fill="none" stroke="#C2C2C2" stroke-width="1.9" stroke-linejoin="round"/></svg>
<div style="position:absolute;left:353px;top:641.7px;width:52.5px;height:20px;background:#F4F5F7;border-radius:3px;"></div>
<div style="position:absolute;left:598px;top:645.1px;width:45.6px;height:16px;background:#DFE1E6;border-radius:3px;"></div>
<svg style="position:absolute;left:668px;top:636px" width="32" height="32" viewBox="0 0 32 32"><circle cx="16" cy="16" r="16" fill="#00B8D9"/>
<path d="M8.4 6.8 H23.6 Q24.3 6.8 24.5 8 L24.9 22.5 Q24.8 23.5 23.8 24 L19.8 26.6 Q16 27.6 12.2 26.6 L8.2 24 Q7.2 23.5 7.1 22.5 L7.5 8 Q7.7 6.8 8.4 6.8 Z" fill="#FFAB00"/>
<ellipse cx="7.5" cy="9.6" rx="2" ry="2.6" transform="rotate(-25 7.5 9.6)" fill="#FF8B00"/>
<ellipse cx="24.2" cy="9" rx="2" ry="2.7" transform="rotate(25 24.2 9)" fill="#FF8B00"/>
<path d="M13.1 7.1 H19 L18.1 12.2 Q18.6 14.3 21.1 15 L21.1 22.8 Q21 23.8 20 23.8 H12.1 Q11 23.8 11 22.8 L11 15 Q13.5 14.3 14.5 12.2 Z" fill="#FFFFFF"/>
<circle cx="12" cy="11.9" r="1.1" fill="#42526E"/><circle cx="20.3" cy="11.9" r="1.1" fill="#42526E"/>
<ellipse cx="16.1" cy="20.1" rx="2.85" ry="1.7" fill="#42526E"/>
<path d="M16.1 21.5 V23.8" stroke="#42526E" stroke-width="1"/>
<path d="M14.2 23.8 Q16.1 25.4 17.9 23.8 Z" fill="#42526E"/></svg>
<svg style="position:absolute;left:947px;top:636px" width="32" height="32" viewBox="0 0 32 32"><circle cx="16" cy="16" r="16" fill="#00B8D9"/>
<path d="M8.4 6.8 H23.6 Q24.3 6.8 24.5 8 L24.9 22.5 Q24.8 23.5 23.8 24 L19.8 26.6 Q16 27.6 12.2 26.6 L8.2 24 Q7.2 23.5 7.1 22.5 L7.5 8 Q7.7 6.8 8.4 6.8 Z" fill="#FFAB00"/>
<ellipse cx="7.5" cy="9.6" rx="2" ry="2.6" transform="rotate(-25 7.5 9.6)" fill="#FF8B00"/>
<ellipse cx="24.2" cy="9" rx="2" ry="2.7" transform="rotate(25 24.2 9)" fill="#FF8B00"/>
<path d="M13.1 7.1 H19 L18.1 12.2 Q18.6 14.3 21.1 15 L21.1 22.8 Q21 23.8 20 23.8 H12.1 Q11 23.8 11 22.8 L11 15 Q13.5 14.3 14.5 12.2 Z" fill="#FFFFFF"/>
<circle cx="12" cy="11.9" r="1.1" fill="#42526E"/><circle cx="20.3" cy="11.9" r="1.1" fill="#42526E"/>
<ellipse cx="16.1" cy="20.1" rx="2.85" ry="1.7" fill="#42526E"/>
<path d="M16.1 21.5 V23.8" stroke="#42526E" stroke-width="1"/>
<path d="M14.2 23.8 Q16.1 25.4 17.9 23.8 Z" fill="#42526E"/></svg>
<svg style="position:absolute;left:1134px;top:636px" width="32" height="32" viewBox="0 0 32 32"><circle cx="16" cy="16" r="16" fill="#00B8D9"/>
<path d="M8.4 6.8 H23.6 Q24.3 6.8 24.5 8 L24.9 22.5 Q24.8 23.5 23.8 24 L19.8 26.6 Q16 27.6 12.2 26.6 L8.2 24 Q7.2 23.5 7.1 22.5 L7.5 8 Q7.7 6.8 8.4 6.8 Z" fill="#FFAB00"/>
<ellipse cx="7.5" cy="9.6" rx="2" ry="2.6" transform="rotate(-25 7.5 9.6)" fill="#FF8B00"/>
<ellipse cx="24.2" cy="9" rx="2" ry="2.7" transform="rotate(25 24.2 9)" fill="#FF8B00"/>
<path d="M13.1 7.1 H19 L18.1 12.2 Q18.6 14.3 21.1 15 L21.1 22.8 Q21 23.8 20 23.8 H12.1 Q11 23.8 11 22.8 L11 15 Q13.5 14.3 14.5 12.2 Z" fill="#FFFFFF"/>
<circle cx="12" cy="11.9" r="1.1" fill="#42526E"/><circle cx="20.3" cy="11.9" r="1.1" fill="#42526E"/>
<ellipse cx="16.1" cy="20.1" rx="2.85" ry="1.7" fill="#42526E"/>
<path d="M16.1 21.5 V23.8" stroke="#42526E" stroke-width="1"/>
<path d="M14.2 23.8 Q16.1 25.4 17.9 23.8 Z" fill="#42526E"/></svg>
<div style="position:absolute;left:1421px;top:643.7px;width:18.2px;height:16px;background:#0052CC;border-radius:8px;"></div>
<div style="position:absolute;left:1421px;top:643.7px;width:18.2px;height:16px;line-height:16px;text-align:center;color:#fff;font-size:11.5px;font-weight:700;font-family:'Liberation Sans',sans-serif">0</div>
<svg style="position:absolute;left:1510px;top:642px" width="20" height="20" viewBox="0 0 20 20"><path d="M7.1 2 H13 V3.4 H7.1Z" fill="#42526E"/><path d="M2 3.2 H17.9 V4.9 H2Z" fill="#42526E"/><path d="M3.2 6 H17 L14.9 17.8 H5.1Z" fill="#42526E"/></svg>
<svg style="position:absolute;left:1548px;top:642px" width="8" height="20" viewBox="0 0 8 20"><circle cx="4" cy="3" r="2" fill="#42526E"/><circle cx="4" cy="10" r="2" fill="#42526E"/><circle cx="4" cy="17" r="2" fill="#42526E"/></svg>
<svg style="position:absolute;left:20px;top:711px" width="20" height="18" viewBox="0 0 20 18"><path d="M9.85,1.85 L12.08,6.88 L17.55,7.45 L13.46,11.12 L14.61,16.50 L9.85,13.75 L5.09,16.50 L6.24,11.12 L2.15,7.45 L7.62,6.88 Z" fill="none" stroke="#C2C2C2" stroke-width="1.9" stroke-linejoin="round"/></svg>
<svg style="position:absolute;left:66px;top:709.6px" width="16" height="18" viewBox="0 0 16 18"><path d="M1.75 1.7 Q4.5 0.7 7.2 1.6 Q10 2.6 12.9 1.5 V9.6 Q10 10.8 7.2 9.9 Q5 9.2 3.6 9.5 V15.8 H1.75 Z" fill="#172B4D" stroke="#172B4D" stroke-width="0.5" stroke-linejoin="round"/></svg>
<div style="position:absolute;left:353px;top:709.7px;width:59.6px;height:20px;background:#F4F5F7;border-radius:3px;"></div>
<div style="position:absolute;left:598px;top:713.1px;width:45.6px;height:16px;background:#DFE1E6;border-radius:3px;"></div>
<svg style="position:absolute;left:668px;top:704px" width="32" height="32" viewBox="0 0 32 32"><circle cx="16" cy="16" r="16" fill="#00B8D9"/>
<path d="M8.4 6.8 H23.6 Q24.3 6.8 24.5 8 L24.9 22.5 Q24.8 23.5 23.8 24 L19.8 26.6 Q16 27.6 12.2 26.6 L8.2 24 Q7.2 23.5 7.1 22.5 L7.5 8 Q7.7 6.8 8.4 6.8 Z" fill="#FFAB00"/>
<ellipse cx="7.5" cy="9.6" rx="2" ry="2.6" transform="rotate(-25 7.5 9.6)" fill="#FF8B00"/>
<ellipse cx="24.2" cy="9" rx="2" ry="2.7" transform="rotate(25 24.2 9)" fill="#FF8B00"/>
<path d="M13.1 7.1 H19 L18.1 12.2 Q18.6 14.3 21.1 15 L21.1 22.8 Q21 23.8 20 23.8 H12.1 Q11 23.8 11 22.8 L11 15 Q13.5 14.3 14.5 12.2 Z" fill="#FFFFFF"/>
<circle cx="12" cy="11.9" r="1.1" fill="#42526E"/><circle cx="20.3" cy="11.9" r="1.1" fill="#42526E"/>
<ellipse cx="16.1" cy="20.1" rx="2.85" ry="1.7" fill="#42526E"/>
<path d="M16.1 21.5 V23.8" stroke="#42526E" stroke-width="1"/>
<path d="M14.2 23.8 Q16.1 25.4 17.9 23.8 Z" fill="#42526E"/></svg>
<svg style="position:absolute;left:947px;top:704px" width="32" height="32" viewBox="0 0 32 32"><circle cx="16" cy="16" r="16" fill="#00B8D9"/>
<path d="M8.4 6.8 H23.6 Q24.3 6.8 24.5 8 L24.9 22.5 Q24.8 23.5 23.8 24 L19.8 26.6 Q16 27.6 12.2 26.6 L8.2 24 Q7.2 23.5 7.1 22.5 L7.5 8 Q7.7 6.8 8.4 6.8 Z" fill="#FFAB00"/>
<ellipse cx="7.5" cy="9.6" rx="2" ry="2.6" transform="rotate(-25 7.5 9.6)" fill="#FF8B00"/>
<ellipse cx="24.2" cy="9" rx="2" ry="2.7" transform="rotate(25 24.2 9)" fill="#FF8B00"/>
<path d="M13.1 7.1 H19 L18.1 12.2 Q18.6 14.3 21.1 15 L21.1 22.8 Q21 23.8 20 23.8 H12.1 Q11 23.8 11 22.8 L11 15 Q13.5 14.3 14.5 12.2 Z" fill="#FFFFFF"/>
<circle cx="12" cy="11.9" r="1.1" fill="#42526E"/><circle cx="20.3" cy="11.9" r="1.1" fill="#42526E"/>
<ellipse cx="16.1" cy="20.1" rx="2.85" ry="1.7" fill="#42526E"/>
<path d="M16.1 21.5 V23.8" stroke="#42526E" stroke-width="1"/>
<path d="M14.2 23.8 Q16.1 25.4 17.9 23.8 Z" fill="#42526E"/></svg>
<svg style="position:absolute;left:1134px;top:704px" width="32" height="32" viewBox="0 0 32 32"><circle cx="16" cy="16" r="16" fill="#00B8D9"/>
<path d="M8.4 6.8 H23.6 Q24.3 6.8 24.5 8 L24.9 22.5 Q24.8 23.5 23.8 24 L19.8 26.6 Q16 27.6 12.2 26.6 L8.2 24 Q7.2 23.5 7.1 22.5 L7.5 8 Q7.7 6.8 8.4 6.8 Z" fill="#FFAB00"/>
<ellipse cx="7.5" cy="9.6" rx="2" ry="2.6" transform="rotate(-25 7.5 9.6)" fill="#FF8B00"/>
<ellipse cx="24.2" cy="9" rx="2" ry="2.7" transform="rotate(25 24.2 9)" fill="#FF8B00"/>
<path d="M13.1 7.1 H19 L18.1 12.2 Q18.6 14.3 21.1 15 L21.1 22.8 Q21 23.8 20 23.8 H12.1 Q11 23.8 11 22.8 L11 15 Q13.5 14.3 14.5 12.2 Z" fill="#FFFFFF"/>
<circle cx="12" cy="11.9" r="1.1" fill="#42526E"/><circle cx="20.3" cy="11.9" r="1.1" fill="#42526E"/>
<ellipse cx="16.1" cy="20.1" rx="2.85" ry="1.7" fill="#42526E"/>
<path d="M16.1 21.5 V23.8" stroke="#42526E" stroke-width="1"/>
<path d="M14.2 23.8 Q16.1 25.4 17.9 23.8 Z" fill="#42526E"/></svg>
<div style="position:absolute;left:1421px;top:711.7px;width:18.2px;height:16px;background:#0052CC;border-radius:8px;"></div>
<div style="position:absolute;left:1421px;top:711.7px;width:18.2px;height:16px;line-height:16px;text-align:center;color:#fff;font-size:11.5px;font-weight:700;font-family:'Liberation Sans',sans-serif">1</div>
<svg style="position:absolute;left:1510px;top:710px" width="20" height="20" viewBox="0 0 20 20"><path d="M7.1 2 H13 V3.4 H7.1Z" fill="#42526E"/><path d="M2 3.2 H17.9 V4.9 H2Z" fill="#42526E"/><path d="M3.2 6 H17 L14.9 17.8 H5.1Z" fill="#42526E"/></svg>
<svg style="position:absolute;left:1548px;top:710px" width="8" height="20" viewBox="0 0 8 20"><circle cx="4" cy="3" r="2" fill="#42526E"/><circle cx="4" cy="10" r="2" fill="#42526E"/><circle cx="4" cy="17" r="2" fill="#42526E"/></svg>
<div class="t" id="t0" style="left:116.67px;top:14.11px;font-size:14px;line-height:16.09px;font-weight:400;color:#FFFFFF;letter-spacing:0.000px;transform:scaleX(0.9756);transform-origin:0 0;">Dashboards</div>
<div class="t" id="t1" style="left:223.66px;top:14.11px;font-size:14px;line-height:16.09px;font-weight:400;color:#FFFFFF;letter-spacing:0.000px;transform:scaleX(0.9715);transform-origin:0 0;">Projects</div>
<div class="t" id="t2" style="left:306.39px;top:14.11px;font-size:14px;line-height:16.09px;font-weight:400;color:#FFFFFF;letter-spacing:0.000px;transform:scaleX(0.9194);transform-origin:0 0;">Issues</div>
<div class="t" id="t3" style="left:377.17px;top:14.11px;font-size:14px;line-height:16.09px;font-weight:400;color:#FFFFFF;letter-spacing:0.000px;transform:scaleX(0.9665);transform-origin:0 0;">Boards</div>
<div class="t" id="t4" style="left:453.41px;top:14.11px;font-size:14px;line-height:16.09px;font-weight:400;color:#FFFFFF;letter-spacing:0.000px;transform:scaleX(0.9318);transform-origin:0 0;">Plans</div>
<div class="t" id="t5" style="left:520.71px;top:14.11px;font-size:14px;line-height:16.09px;font-weight:400;color:#FFFFFF;letter-spacing:0.000px;transform:scaleX(0.9081);transform-origin:0 0;">Assets</div>
<div class="t" id="t6" style="left:593.20px;top:14.11px;font-size:14px;line-height:16.09px;font-weight:400;color:#FFFFFF;letter-spacing:0.000px;transform:scaleX(0.9694);transform-origin:0 0;">Templates</div>
<div class="t" id="t7" style="left:700.70px;top:14.11px;font-size:14px;line-height:16.09px;font-weight:700;color:#FFFFFF;letter-spacing:0.000px;transform:scaleX(0.9441);transform-origin:0 0;">Create</div>
<div class="t" id="t8" style="left:1249.69px;top:14.91px;font-size:14px;line-height:16.09px;font-weight:400;color:#B3BAC5;letter-spacing:0.000px;transform:scaleX(0.9276);transform-origin:0 0;">Search</div>
<div class="t" id="t9" style="left:19.65px;top:64.69px;font-size:29px;line-height:33.32px;font-weight:400;color:#172B4D;letter-spacing:0.000px;transform:scaleX(0.9936);transform-origin:0 0;-webkit-text-stroke:0.35px #172B4D;">Manage Templates</div>
<div class="t" id="t10" style="left:20.20px;top:126.31px;font-size:14px;line-height:16.09px;font-weight:400;color:#0052CC;letter-spacing:0.000px;transform:scaleX(0.9968);transform-origin:0 0;-webkit-text-stroke:0.3px #0052CC;">Templates</div>
<div class="t" id="t11" style="left:104.20px;top:126.31px;font-size:14px;line-height:16.09px;font-weight:400;color:#42526E;letter-spacing:0.000px;transform:scaleX(0.9293);transform-origin:0 0;">Scopes</div>
<div class="t" id="t12" style="left:167.43px;top:126.31px;font-size:14px;line-height:16.09px;font-weight:400;color:#42526E;letter-spacing:0.000px;transform:scaleX(0.9807);transform-origin:0 0;">Hierarchies</div>
<div class="t" id="t13" style="left:256.44px;top:126.31px;font-size:14px;line-height:16.09px;font-weight:400;color:#42526E;letter-spacing:0.000px;transform:scaleX(0.9490);transform-origin:0 0;">Variables</div>
<div class="t" id="t14" style="left:332.20px;top:126.31px;font-size:14px;line-height:16.09px;font-weight:400;color:#42526E;letter-spacing:0.000px;transform:scaleX(0.8843);transform-origin:0 0;">Tags</div>
<div class="t" id="t15" style="left:378.45px;top:126.31px;font-size:14px;line-height:16.09px;font-weight:400;color:#42526E;letter-spacing:0.000px;transform:scaleX(0.9463);transform-origin:0 0;">Checklists</div>
<div class="t" id="t16" style="left:15.95px;top:169.71px;font-size:14px;line-height:16.09px;font-weight:400;color:#172B4D;letter-spacing:-0.067px;">Template is an easy way to prepopulate field values when creating or editing a single issue.</div>
<div class="t" id="t17" style="left:579.43px;top:169.71px;font-size:14px;line-height:16.09px;font-weight:400;color:#0052CC;letter-spacing:0.000px;transform:scaleX(0.9727);transform-origin:0 0;">Learn more</div>
<div class="t" id="t18" style="left:1381.45px;top:176.11px;font-size:14px;line-height:16.09px;font-weight:700;color:#FFFFFF;letter-spacing:0.000px;transform:scaleX(0.9484);transform-origin:0 0;">Create Template</div>
<div class="t" id="t19" style="left:24.66px;top:227.91px;font-size:14px;line-height:16.09px;font-weight:400;color:#6B778C;letter-spacing:0.000px;transform:scaleX(0.9801);transform-origin:0 0;">Enter name</div>
<div class="t" id="t20" style="left:305.68px;top:227.91px;font-size:14px;line-height:16.09px;font-weight:400;color:#6B778C;letter-spacing:0.000px;transform:scaleX(0.9858);transform-origin:0 0;">Select tag</div>
<div class="t" id="t21" style="left:587.20px;top:227.91px;font-size:14px;line-height:16.09px;font-weight:400;color:#6B778C;letter-spacing:0.000px;transform:scaleX(0.9686);transform-origin:0 0;">Select scope</div>
<div class="t" id="t22" style="left:869.20px;top:227.91px;font-size:14px;line-height:16.09px;font-weight:400;color:#172B4D;letter-spacing:0.000px;transform:scaleX(0.8894);transform-origin:0 0;">ALL</div>
<div class="t" id="t23" style="left:1149.42px;top:227.91px;font-size:14px;line-height:16.09px;font-weight:400;color:#6B778C;letter-spacing:0.000px;transform:scaleX(0.9774);transform-origin:0 0;">Select owner</div>
<div class="t" id="t24" style="left:1429.70px;top:212.95px;font-size:12px;line-height:13.79px;font-weight:400;color:#6B778C;letter-spacing:0.000px;transform:scaleX(0.9921);transform-origin:0 0;">Can apply</div>
<div class="t" id="t25" style="left:1516.41px;top:227.71px;font-size:14px;line-height:16.09px;font-weight:400;color:#42526E;letter-spacing:0.000px;transform:scaleX(0.9407);transform-origin:0 0;">Reset</div>
<div class="t" id="t26" style="left:101.20px;top:289.15px;font-size:12px;line-height:13.79px;font-weight:400;color:#5E6C84;letter-spacing:0.000px;transform:scaleX(0.9872);transform-origin:0 0;-webkit-text-stroke:0.45px #5E6C84;">Name</div>
<div class="t" id="t27" style="left:349.95px;top:289.15px;font-size:12px;line-height:13.79px;font-weight:400;color:#5E6C84;letter-spacing:0.000px;transform:scaleX(0.9125);transform-origin:0 0;-webkit-text-stroke:0.45px #5E6C84;">Tag</div>
<div class="t" id="t28" style="left:473.50px;top:289.15px;font-size:12px;line-height:13.79px;font-weight:400;color:#5E6C84;letter-spacing:0.000px;transform:scaleX(0.9451);transform-origin:0 0;-webkit-text-stroke:0.45px #5E6C84;">Scope</div>
<div class="t" id="t29" style="left:598.70px;top:289.15px;font-size:12px;line-height:13.79px;font-weight:400;color:#5E6C84;letter-spacing:0.000px;transform:scaleX(0.9775);transform-origin:0 0;-webkit-text-stroke:0.45px #5E6C84;">Available</div>
<div class="t" id="t30" style="left:659.70px;top:289.15px;font-size:12px;line-height:13.79px;font-weight:400;color:#5E6C84;letter-spacing:0.000px;transform:scaleX(0.9880);transform-origin:0 0;-webkit-text-stroke:0.45px #5E6C84;">Owners</div>
<div class="t" id="t31" style="left:830.67px;top:289.15px;font-size:12px;line-height:13.79px;font-weight:400;color:#5E6C84;letter-spacing:0.000px;transform:scaleX(0.9941);transform-origin:0 0;-webkit-text-stroke:0.45px #5E6C84;">Created</div>
<div class="t" id="t32" style="left:939.71px;top:289.15px;font-size:12px;line-height:13.79px;font-weight:400;color:#5E6C84;letter-spacing:0.000px;transform:scaleX(0.9814);transform-origin:0 0;-webkit-text-stroke:0.45px #5E6C84;">Created by</div>
<div class="t" id="t33" style="left:1125.70px;top:289.15px;font-size:12px;line-height:13.79px;font-weight:400;color:#5E6C84;letter-spacing:0.000px;transform:scaleX(1.0026);transform-origin:0 0;-webkit-text-stroke:0.45px #5E6C84;">Changed by</div>
<div class="t" id="t34" style="left:1311.69px;top:289.15px;font-size:12px;line-height:13.79px;font-weight:400;color:#5E6C84;letter-spacing:0.000px;transform:scaleX(0.9985);transform-origin:0 0;-webkit-text-stroke:0.45px #5E6C84;">Changed</div>
<div class="t" id="t35" style="left:1420.70px;top:289.15px;font-size:12px;line-height:13.79px;font-weight:400;color:#5E6C84;letter-spacing:0.000px;transform:scaleX(0.9374);transform-origin:0 0;-webkit-text-stroke:0.45px #5E6C84;">Usages</div>
<div class="t" id="t36" style="left:598.80px;top:305.45px;font-size:12px;line-height:13.79px;font-weight:400;color:#5E6C84;letter-spacing:0.000px;transform:scaleX(0.9906);transform-origin:0 0;-webkit-text-stroke:0.45px #5E6C84;">for</div>
<div class="t" id="t37" style="left:113.16px;top:338.47px;font-size:13.6px;line-height:15.63px;font-weight:400;color:#0052CC;letter-spacing:0.000px;transform:scaleX(1.0107);transform-origin:0 0;-webkit-text-stroke:0.35px #0052CC;">new</div>
<div class="t" id="t38" style="left:111.20px;top:375.77px;font-size:11px;line-height:12.64px;font-weight:400;color:#6B778C;letter-spacing:0.000px;transform:scaleX(0.9217);transform-origin:0 0;">new</div>
<div class="t" id="t39" style="left:357.20px;top:351.31px;font-size:14px;line-height:16.09px;font-weight:400;color:#172B4D;letter-spacing:0.000px;transform:scaleX(0.8812);transform-origin:0 0;">GLOBAL</div>
<div class="t" id="t40" style="left:473.45px;top:352.41px;font-size:14px;line-height:16.09px;font-weight:400;color:#172B4D;letter-spacing:0.000px;transform:scaleX(0.8812);transform-origin:0 0;">GLOBAL</div>
<div class="t" id="t41" style="left:601.70px;top:355.19px;font-size:11.3px;line-height:12.98px;font-weight:700;color:#42526E;letter-spacing:0.000px;transform:scaleX(1.0506);transform-origin:0 0;">OW...</div>
<div class="t" id="t42" style="left:721.69px;top:351.61px;font-size:14px;line-height:16.09px;font-weight:400;color:#0052CC;letter-spacing:0.000px;transform:scaleX(1.0400);transform-origin:0 0;">admin</div>
<div class="t" id="t43" style="left:1001.45px;top:351.61px;font-size:14px;line-height:16.09px;font-weight:400;color:#0052CC;letter-spacing:0.000px;transform:scaleX(1.0400);transform-origin:0 0;">admin</div>
<div class="t" id="t44" style="left:1187.43px;top:351.61px;font-size:14px;line-height:16.09px;font-weight:400;color:#0052CC;letter-spacing:0.000px;transform:scaleX(1.0400);transform-origin:0 0;">admin</div>
<div class="t" id="t45" style="left:831.20px;top:351.61px;font-size:14px;line-height:16.09px;font-weight:400;color:#172B4D;letter-spacing:0.000px;transform:scaleX(1.0136);transform-origin:0 0;">1/23/2024</div>
<div class="t" id="t46" style="left:1312.70px;top:351.61px;font-size:14px;line-height:16.09px;font-weight:400;color:#172B4D;letter-spacing:0.000px;transform:scaleX(1.0136);transform-origin:0 0;">1/26/2024</div>
<div class="t" id="t47" style="left:113.17px;top:408.57px;font-size:13.6px;line-height:15.63px;font-weight:400;color:#0052CC;letter-spacing:0.000px;transform:scaleX(1.0433);transform-origin:0 0;-webkit-text-stroke:0.35px #0052CC;">new by John</div>
<div class="t" id="t48" style="left:357.20px;top:413.31px;font-size:14px;line-height:16.09px;font-weight:400;color:#172B4D;letter-spacing:0.000px;transform:scaleX(0.8812);transform-origin:0 0;">GLOBAL</div>
<div class="t" id="t49" style="left:473.45px;top:414.41px;font-size:14px;line-height:16.09px;font-weight:400;color:#172B4D;letter-spacing:0.000px;transform:scaleX(0.8812);transform-origin:0 0;">GLOBAL</div>
<div class="t" id="t50" style="left:601.71px;top:416.89px;font-size:11.3px;line-height:12.98px;font-weight:700;color:#006644;letter-spacing:0.000px;transform:scaleX(0.8375);transform-origin:0 0;">SCOPE</div>
<div class="t" id="t51" style="left:721.70px;top:413.61px;font-size:14px;line-height:16.09px;font-weight:400;color:#0052CC;letter-spacing:0.000px;transform:scaleX(0.9866);transform-origin:0 0;">John Snow</div>
<div class="t" id="t52" style="left:1001.45px;top:413.61px;font-size:14px;line-height:16.09px;font-weight:400;color:#0052CC;letter-spacing:0.000px;transform:scaleX(0.9866);transform-origin:0 0;">John Snow</div>
<div class="t" id="t53" style="left:1187.45px;top:413.61px;font-size:14px;line-height:16.09px;font-weight:400;color:#0052CC;letter-spacing:0.000px;transform:scaleX(0.9866);transform-origin:0 0;">John Snow</div>
<div class="t" id="t54" style="left:831.20px;top:413.61px;font-size:14px;line-height:16.09px;font-weight:400;color:#172B4D;letter-spacing:0.000px;transform:scaleX(1.0136);transform-origin:0 0;">1/23/2024</div>
<div class="t" id="t55" style="left:1312.70px;top:413.61px;font-size:14px;line-height:16.09px;font-weight:400;color:#172B4D;letter-spacing:0.000px;transform:scaleX(1.0136);transform-origin:0 0;">1/23/2024</div>
<div class="t" id="t56" style="left:113.20px;top:464.57px;font-size:13.6px;line-height:15.63px;font-weight:400;color:#0052CC;letter-spacing:0.000px;transform:scaleX(0.9933);transform-origin:0 0;-webkit-text-stroke:0.35px #0052CC;">new by John COPY</div>
<div class="t" id="t57" style="left:357.20px;top:469.31px;font-size:14px;line-height:16.09px;font-weight:400;color:#172B4D;letter-spacing:0.000px;transform:scaleX(0.8812);transform-origin:0 0;">GLOBAL</div>
<div class="t" id="t58" style="left:473.45px;top:470.41px;font-size:14px;line-height:16.09px;font-weight:400;color:#172B4D;letter-spacing:0.000px;transform:scaleX(0.8812);transform-origin:0 0;">GLOBAL</div>
<div class="t" id="t59" style="left:601.71px;top:472.89px;font-size:11.3px;line-height:12.98px;font-weight:700;color:#006644;letter-spacing:0.000px;transform:scaleX(0.8375);transform-origin:0 0;">SCOPE</div>
<div class="t" id="t60" style="left:721.69px;top:469.61px;font-size:14px;line-height:16.09px;font-weight:400;color:#0052CC;letter-spacing:0.000px;transform:scaleX(1.0400);transform-origin:0 0;">admin</div>
<div class="t" id="t61" style="left:1001.45px;top:469.61px;font-size:14px;line-height:16.09px;font-weight:400;color:#0052CC;letter-spacing:0.000px;transform:scaleX(1.0400);transform-origin:0 0;">admin</div>
<div class="t" id="t62" style="left:1187.43px;top:469.61px;font-size:14px;line-height:16.09px;font-weight:400;color:#0052CC;letter-spacing:0.000px;transform:scaleX(1.0400);transform-origin:0 0;">admin</div>
<div class="t" id="t63" style="left:831.20px;top:469.61px;font-size:14px;line-height:16.09px;font-weight:400;color:#172B4D;letter-spacing:0.000px;transform:scaleX(1.0136);transform-origin:0 0;">1/23/2024</div>
<div class="t" id="t64" style="left:1312.70px;top:469.61px;font-size:14px;line-height:16.09px;font-weight:400;color:#172B4D;letter-spacing:0.000px;transform:scaleX(1.0136);transform-origin:0 0;">1/23/2024</div>
<div class="t" id="t65" style="left:113.20px;top:520.57px;font-size:13.6px;line-height:15.63px;font-weight:400;color:#0052CC;letter-spacing:0.000px;transform:scaleX(0.9755);transform-origin:0 0;-webkit-text-stroke:0.35px #0052CC;">Fields</div>
<div class="t" id="t66" style="left:356.18px;top:525.31px;font-size:14px;line-height:16.09px;font-weight:400;color:#172B4D;letter-spacing:0.000px;transform:scaleX(0.9568);transform-origin:0 0;">Fields values</div>
<div class="t" id="t67" style="left:473.45px;top:526.41px;font-size:14px;line-height:16.09px;font-weight:400;color:#172B4D;letter-spacing:0.000px;transform:scaleX(0.8812);transform-origin:0 0;">GLOBAL</div>
<div class="t" id="t68" style="left:601.70px;top:529.19px;font-size:11.3px;line-height:12.98px;font-weight:700;color:#42526E;letter-spacing:0.000px;transform:scaleX(1.0506);transform-origin:0 0;">OW...</div>
<div class="t" id="t69" style="left:721.69px;top:525.61px;font-size:14px;line-height:16.09px;font-weight:400;color:#0052CC;letter-spacing:0.000px;transform:scaleX(1.0400);transform-origin:0 0;">admin</div>
<div class="t" id="t70" style="left:1001.45px;top:525.61px;font-size:14px;line-height:16.09px;font-weight:400;color:#0052CC;letter-spacing:0.000px;transform:scaleX(1.0400);transform-origin:0 0;">admin</div>
<div class="t" id="t71" style="left:1187.43px;top:525.61px;font-size:14px;line-height:16.09px;font-weight:400;color:#0052CC;letter-spacing:0.000px;transform:scaleX(1.0400);transform-origin:0 0;">admin</div>
<div class="t" id="t72" style="left:831.20px;top:525.61px;font-size:14px;line-height:16.09px;font-weight:400;color:#172B4D;letter-spacing:0.000px;transform:scaleX(1.0136);transform-origin:0 0;">1/23/2024</div>
<div class="t" id="t73" style="left:1312.70px;top:525.61px;font-size:14px;line-height:16.09px;font-weight:400;color:#172B4D;letter-spacing:0.000px;transform:scaleX(1.0136);transform-origin:0 0;">1/23/2024</div>
<div class="t" id="t74" style="left:113.20px;top:576.57px;font-size:13.6px;line-height:15.63px;font-weight:400;color:#0052CC;letter-spacing:0.000px;transform:scaleX(1.0673);transform-origin:0 0;-webkit-text-stroke:0.35px #0052CC;">test</div>
<div class="t" id="t75" style="left:357.20px;top:581.31px;font-size:14px;line-height:16.09px;font-weight:400;color:#172B4D;letter-spacing:0.000px;transform:scaleX(0.8812);transform-origin:0 0;">GLOBAL</div>
<div class="t" id="t76" style="left:473.45px;top:582.41px;font-size:14px;line-height:16.09px;font-weight:400;color:#172B4D;letter-spacing:0.000px;transform:scaleX(0.8812);transform-origin:0 0;">GLOBAL</div>
<div class="t" id="t77" style="left:601.70px;top:585.19px;font-size:11.3px;line-height:12.98px;font-weight:700;color:#42526E;letter-spacing:0.000px;transform:scaleX(1.0506);transform-origin:0 0;">OW...</div>
<div class="t" id="t78" style="left:721.69px;top:581.61px;font-size:14px;line-height:16.09px;font-weight:400;color:#0052CC;letter-spacing:0.000px;transform:scaleX(1.0400);transform-origin:0 0;">admin</div>
<div class="t" id="t79" style="left:1001.45px;top:581.61px;font-size:14px;line-height:16.09px;font-weight:400;color:#0052CC;letter-spacing:0.000px;transform:scaleX(1.0400);transform-origin:0 0;">admin</div>
<div class="t" id="t80" style="left:1187.43px;top:581.61px;font-size:14px;line-height:16.09px;font-weight:400;color:#0052CC;letter-spacing:0.000px;transform:scaleX(1.0400);transform-origin:0 0;">admin</div>
<div class="t" id="t81" style="left:831.20px;top:581.61px;font-size:14px;line-height:16.09px;font-weight:400;color:#172B4D;letter-spacing:0.000px;transform:scaleX(1.0136);transform-origin:0 0;">1/23/2024</div>
<div class="t" id="t82" style="left:1312.70px;top:581.61px;font-size:14px;line-height:16.09px;font-weight:400;color:#172B4D;letter-spacing:0.000px;transform:scaleX(1.0136);transform-origin:0 0;">1/23/2024</div>
<div class="t" id="t83" style="left:113.14px;top:630.47px;font-size:13.6px;line-height:15.63px;font-weight:400;color:#0052CC;letter-spacing:0.000px;transform:scaleX(1.0413);transform-origin:0 0;-webkit-text-stroke:0.35px #0052CC;">kanban</div>
<div class="t" id="t84" style="left:111.20px;top:667.77px;font-size:11px;line-height:12.64px;font-weight:400;color:#6B778C;letter-spacing:0.000px;transform:scaleX(0.9884);transform-origin:0 0;">kanban</div>
<div class="t" id="t85" style="left:357.20px;top:643.31px;font-size:14px;line-height:16.09px;font-weight:400;color:#172B4D;letter-spacing:0.000px;transform:scaleX(0.9720);transform-origin:0 0;">kanban</div>
<div class="t" id="t86" style="left:473.45px;top:644.41px;font-size:14px;line-height:16.09px;font-weight:400;color:#172B4D;letter-spacing:0.000px;transform:scaleX(0.8812);transform-origin:0 0;">GLOBAL</div>
<div class="t" id="t87" style="left:601.70px;top:647.19px;font-size:11.3px;line-height:12.98px;font-weight:700;color:#42526E;letter-spacing:0.000px;transform:scaleX(1.0506);transform-origin:0 0;">OW...</div>
<div class="t" id="t88" style="left:721.69px;top:643.61px;font-size:14px;line-height:16.09px;font-weight:400;color:#0052CC;letter-spacing:0.000px;transform:scaleX(1.0400);transform-origin:0 0;">admin</div>
<div class="t" id="t89" style="left:1001.45px;top:643.61px;font-size:14px;line-height:16.09px;font-weight:400;color:#0052CC;letter-spacing:0.000px;transform:scaleX(1.0400);transform-origin:0 0;">admin</div>
<div class="t" id="t90" style="left:1187.43px;top:643.61px;font-size:14px;line-height:16.09px;font-weight:400;color:#0052CC;letter-spacing:0.000px;transform:scaleX(1.0400);transform-origin:0 0;">admin</div>
<div class="t" id="t91" style="left:831.20px;top:643.61px;font-size:14px;line-height:16.09px;font-weight:400;color:#172B4D;letter-spacing:0.000px;transform:scaleX(1.0136);transform-origin:0 0;">1/23/2024</div>
<div class="t" id="t92" style="left:1312.70px;top:643.61px;font-size:14px;line-height:16.09px;font-weight:400;color:#172B4D;letter-spacing:0.000px;transform:scaleX(1.0136);transform-origin:0 0;">1/23/2024</div>
<div class="t" id="t93" style="left:113.18px;top:698.47px;font-size:13.6px;line-height:15.63px;font-weight:400;color:#0052CC;letter-spacing:0.000px;transform:scaleX(1.0542);transform-origin:0 0;-webkit-text-stroke:0.35px #0052CC;">new test</div>
<div class="t" id="t94" style="left:111.21px;top:735.77px;font-size:11px;line-height:12.64px;font-weight:400;color:#6B778C;letter-spacing:0.000px;transform:scaleX(0.9801);transform-origin:0 0;">new test</div>
<div class="t" id="t95" style="left:357.20px;top:711.31px;font-size:14px;line-height:16.09px;font-weight:400;color:#172B4D;letter-spacing:0.000px;transform:scaleX(0.9808);transform-origin:0 0;">new test</div>
<div class="t" id="t96" style="left:473.45px;top:712.41px;font-size:14px;line-height:16.09px;font-weight:400;color:#172B4D;letter-spacing:0.000px;transform:scaleX(0.8812);transform-origin:0 0;">GLOBAL</div>
<div class="t" id="t97" style="left:601.70px;top:715.19px;font-size:11.3px;line-height:12.98px;font-weight:700;color:#42526E;letter-spacing:0.000px;transform:scaleX(1.0506);transform-origin:0 0;">OW...</div>
<div class="t" id="t98" style="left:721.69px;top:711.61px;font-size:14px;line-height:16.09px;font-weight:400;color:#0052CC;letter-spacing:0.000px;transform:scaleX(1.0400);transform-origin:0 0;">admin</div>
<div class="t" id="t99" style="left:1001.45px;top:711.61px;font-size:14px;line-height:16.09px;font-weight:400;color:#0052CC;letter-spacing:0.000px;transform:scaleX(1.0400);transform-origin:0 0;">admin</div>
<div class="t" id="t100" style="left:1187.43px;top:711.61px;font-size:14px;line-height:16.09px;font-weight:400;color:#0052CC;letter-spacing:0.000px;transform:scaleX(1.0400);transform-origin:0 0;">admin</div>
<div class="t" id="t101" style="left:831.20px;top:711.61px;font-size:14px;line-height:16.09px;font-weight:400;color:#172B4D;letter-spacing:0.000px;transform:scaleX(1.0136);transform-origin:0 0;">1/23/2024</div>
<div class="t" id="t102" style="left:1312.70px;top:711.61px;font-size:14px;line-height:16.09px;font-weight:400;color:#172B4D;letter-spacing:0.000px;transform:scaleX(1.0136);transform-origin:0 0;">1/23/2024</div>
</body></html>
